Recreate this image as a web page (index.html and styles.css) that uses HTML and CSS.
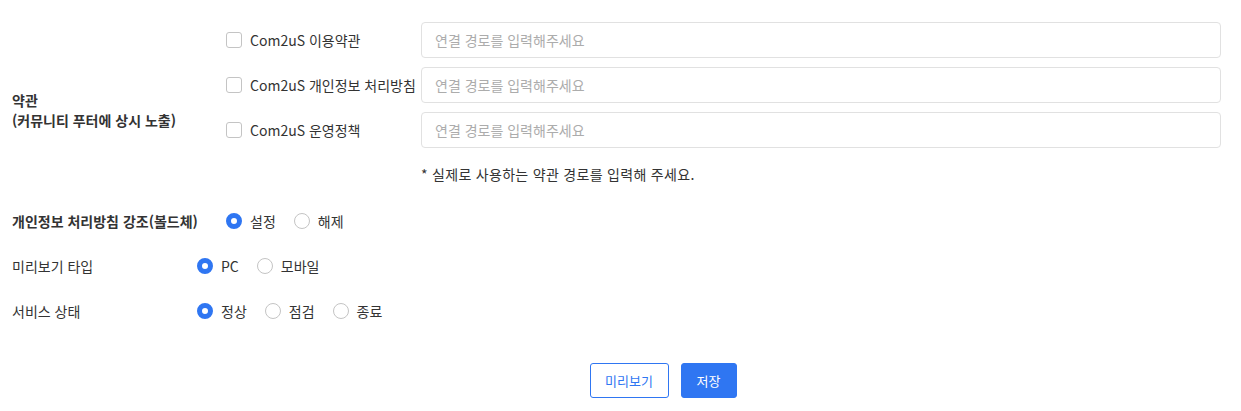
FILE: index.html
```html
<!DOCTYPE html>
<html lang="ko">
<head>
  <meta charset="UTF-8">
  <meta name="viewport" content="width=device-width, initial-scale=1.0">
  <title>커뮤니티 설정</title>
  <link rel="stylesheet" href="styles.css">
</head>
<body>
  <div class="setting">
    <div class="terms">
      <div class="label bold">약관<br>(커뮤니티 푸터에 상시 노출)</div>
      <div class="terms-body">
        <div class="term-row">
          <label class="check"><span class="box"></span>Com2uS 이용약관</label>
          <input type="text" placeholder="연결 경로를 입력해주세요">
        </div>
        <div class="term-row">
          <label class="check"><span class="box"></span>Com2uS 개인정보 처리방침</label>
          <input type="text" placeholder="연결 경로를 입력해주세요">
        </div>
        <div class="term-row">
          <label class="check"><span class="box"></span>Com2uS 운영정책</label>
          <input type="text" placeholder="연결 경로를 입력해주세요">
        </div>
        <p class="note">* 실제로 사용하는 약관 경로를 입력해 주세요.</p>
      </div>
    </div>

    <div class="row wide">
      <div class="label bold">개인정보 처리방침 강조(볼드체)</div>
      <label class="radio"><span class="dot on"></span>설정</label>
      <label class="radio"><span class="dot"></span>해제</label>
    </div>

    <div class="row">
      <div class="label">미리보기 타입</div>
      <label class="radio"><span class="dot on"></span>PC</label>
      <label class="radio"><span class="dot"></span>모바일</label>
    </div>

    <div class="row">
      <div class="label">서비스 상태</div>
      <label class="radio"><span class="dot on"></span>정상</label>
      <label class="radio"><span class="dot"></span>점검</label>
      <label class="radio"><span class="dot"></span>종료</label>
    </div>

    <div class="buttons">
      <button class="btn line">미리보기</button>
      <button class="btn fill">저장</button>
    </div>
  </div>
</body>
</html>
```

FILE: styles.css
```css
body {
  margin: 0;
  font-family: "Noto Sans CJK KR", "Noto Sans", sans-serif;
  font-size: 14px;
  color: #333;
  background: #fff;
}
.setting {
  padding: 22px 20px 0 12px;
}
.label {
  line-height: 20px;
  color: #333;
}
.bold {
  font-weight: bold;
}

/* 약관 영역 */
.terms {
  display: flex;
  align-items: center;
  height: 176px;
}
.terms .label {
  width: 214px;
  flex: none;
}
.terms-body {
  flex: 1;
  align-self: flex-start;
}
.term-row {
  display: flex;
  align-items: center;
  margin-bottom: 9px;
}
.check {
  width: 195px;
  flex: none;
  display: flex;
  align-items: center;
  white-space: nowrap;
}
.box {
  width: 14px;
  height: 14px;
  border: 1px solid #c4c4c4;
  border-radius: 3px;
  margin-right: 8px;
}
.term-row input {
  flex: 1;
  height: 36px;
  box-sizing: border-box;
  border: 1px solid #e1e1e1;
  border-radius: 4px;
  padding: 0 13px;
  font-family: inherit;
  font-size: 14px;
  color: #333;
}
.term-row input::placeholder {
  color: #acacac;
}
.note {
  margin: 16px 0 0 195px;
  font-size: 14px;
  line-height: 20px;
  letter-spacing: 0.3px;
  color: #333;
}

/* 라디오 행 */
.row {
  display: flex;
  align-items: center;
  height: 45px;
}
.row .label {
  width: 185px;
  flex: none;
}
.row.wide .label {
  width: 214px;
}
.radio {
  display: flex;
  align-items: center;
  margin-right: 18px;
}
.dot {
  width: 16px;
  height: 16px;
  box-sizing: border-box;
  border: 1px solid #c4c4c4;
  border-radius: 50%;
  margin-right: 8px;
}
.dot.on {
  border: 5px solid #2f76f2;
}

/* 하단 버튼 */
.buttons {
  display: flex;
  justify-content: center;
  gap: 12px;
  margin-top: 30px;
  padding-left: 93px;
}
.btn {
  height: 35px;
  border-radius: 3px;
  font-family: inherit;
  font-size: 13px;
  cursor: pointer;
}
.line {
  width: 79px;
  background: #fff;
  border: 1px solid #2f76f2;
  color: #2f76f2;
}
.fill {
  width: 56px;
  background: #2f76f2;
  border: 1px solid #2f76f2;
  color: #fff;
}
```
